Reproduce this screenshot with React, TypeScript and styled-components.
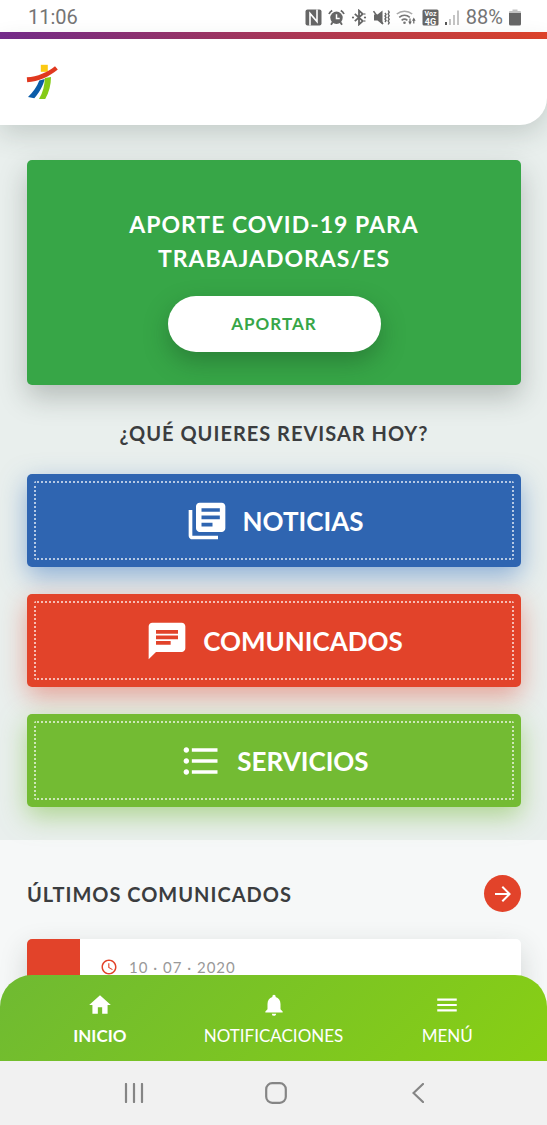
import React from 'react';
import styled, { createGlobalStyle } from 'styled-components';
import {
  MdAccessTime,
  MdArrowForward,
  MdChat,
  MdFormatListBulleted,
  MdHome,
  MdLibraryBooks,
  MdMenu,
  MdNotifications,
} from 'react-icons/md';

const GlobalStyle = createGlobalStyle`
  * { box-sizing: border-box; }
  body {
    margin: 0;
    font-family: Lato, "Liberation Sans", sans-serif;
    color: #3b3d3f;
    background: #e9efed;
  }
  h1, h2, p { margin: 0; }
  svg { display: block; flex: none; }
`;

const Screen = styled.div`
  display: flex;
  flex-direction: column;
  height: 100vh;
`;

const StatusBar = styled.div`
  display: flex;
  flex: none;
  align-items: center;
  justify-content: space-between;
  height: 32px;
  padding: 2px 26px 0 28px;
  background: #fff;
  color: #757575;
  font-family: Roboto, sans-serif;
  font-size: 20px;
  line-height: 24px;
`;

const StatusIcons = styled.div`
  display: flex;
  align-items: center;
  gap: 6px;
`;

const Stripe = styled.div`
  flex: none;
  height: 7px;
  background: linear-gradient(90deg, #752b8c, #e2432a);
`;

const Header = styled.header`
  display: flex;
  flex: none;
  align-items: center;
  height: 86px;
  padding: 0 26px;
  background: #fff;
  border-bottom-right-radius: 27px;
  box-shadow: 0 8px 28px rgba(40, 60, 50, 0.2);
  z-index: 1;
`;

const Scroller = styled.main`
  flex: 1;
  min-height: 0;
  margin: -28px 0 -32px;
  padding-top: 28px;
  overflow-y: auto;
  scrollbar-width: none;
`;

const HomeSection = styled.section`
  display: flex;
  flex-direction: column;
  padding: 35px 26px 33px 27px;
`;

const PromoCard = styled.div`
  display: flex;
  flex-direction: column;
  align-items: center;
  padding: 47px 60px 33px;
  border-radius: 5px;
  background: #37a647;
  box-shadow: 0 12px 28px rgba(40, 50, 45, 0.27);
`;

const PromoTitle = styled.h1`
  max-width: 320px;
  color: #fff;
  font-size: 23px;
  font-weight: 700;
  line-height: 34px;
  letter-spacing: 1px;
  text-align: center;
`;

const PillButton = styled.button`
  width: 213px;
  height: 56px;
  margin-top: 21px;
  border: 0;
  border-radius: 28px;
  background: #fff;
  color: #37a647;
  font: 700 17px/24px Lato, sans-serif;
  letter-spacing: 1px;
  box-shadow: 0 10px 24px rgba(20, 60, 30, 0.35);
`;

const Heading = styled.h2<{ $centered?: boolean }>`
  font-size: 20px;
  font-weight: 700;
  line-height: 32px;
  letter-spacing: 1px;
  text-align: ${(p) => (p.$centered ? 'center' : 'left')};
  padding: ${(p) => (p.$centered ? '32px 0 25px' : '0')};
`;

const TileList = styled.div`
  display: flex;
  flex-direction: column;
  gap: 27px;
`;

const Tile = styled.button<{ $color: string; $glow: string }>`
  display: flex;
  height: 93px;
  padding: 7px;
  border: 0;
  border-radius: 5px;
  background: ${(p) => p.$color};
  color: #fff;
  font: 700 26px/32px Lato, sans-serif;
  box-shadow: 0 9px 26px ${(p) => p.$glow};
`;

const TileFrame = styled.span`
  display: flex;
  flex: 1;
  align-self: stretch;
  align-items: center;
  justify-content: center;
  gap: 14px;
  border: 2px dotted rgba(255, 255, 255, 0.65);
  border-radius: 2px;
`;

const NewsSection = styled.section`
  padding: 35px 26px 40px 27px;
  background: rgba(250, 251, 251, 0.75);
`;

const NewsHeader = styled.div`
  display: flex;
  align-items: center;
  justify-content: space-between;
  margin-bottom: 27px;
`;

const RoundButton = styled.button`
  display: flex;
  align-items: center;
  justify-content: center;
  width: 37px;
  height: 37px;
  padding: 0;
  border: 0;
  border-radius: 50%;
  background: #e2432a;
  color: #fff;
`;

const NewsCard = styled.article`
  display: flex;
  height: 120px;
  border-radius: 5px;
  overflow: hidden;
  background: #fff;
  box-shadow: 0 10px 28px rgba(40, 50, 45, 0.18);
`;

const NewsAccent = styled.div`
  flex: none;
  width: 53px;
  background: #e2432a;
`;

const NewsDate = styled.div`
  display: flex;
  align-items: center;
  gap: 11px;
  height: 20px;
  margin: 18px 20px;
  color: #e2432a;
`;

const DateText = styled.time`
  color: #999;
  font-size: 15px;
  line-height: 20px;
  letter-spacing: 1px;
`;

const TabBar = styled.nav`
  display: flex;
  flex: none;
  height: 86px;
  padding: 0 13px;
  border-radius: 32px 32px 0 0;
  background: linear-gradient(135deg, #6fba32, #88cf14);
  z-index: 1;
`;

const Tab = styled.a<{ $active?: boolean }>`
  display: flex;
  flex: 1;
  flex-direction: column;
  align-items: center;
  gap: 6px;
  padding-top: 17px;
  color: #fff;
  font-size: 17px;
  font-weight: ${(p) => (p.$active ? 700 : 400)};
  line-height: 24px;
  text-decoration: none;
`;

const SystemBar = styled.div`
  display: flex;
  flex: none;
  height: 64px;
  padding: 0 58px 0 63px;
  background: #f1f1f1;
`;

const SystemButton = styled.button`
  display: flex;
  flex: 1;
  align-items: center;
  justify-content: center;
  padding: 0;
  border: 0;
  background: none;
  color: #858585;
`;

const NfcIcon = () => (
  <svg width="17" height="17" viewBox="0 0 17 17">
    <rect x="0.5" y="0.5" width="16" height="16" rx="2" fill="#666" />
    <path d="M5 16.5V4.500l7 8V0.500" fill="none" stroke="#fff" strokeWidth="1.600" />
  </svg>
);

const AlarmIcon = () => (
  <svg width="17" height="17" viewBox="0 0 17 17">
    <circle cx="8.5" cy="8.8" r="6.2" fill="#666" />
    <path d="M8.5 5.2v4.2h3.2" fill="none" stroke="#fff" strokeWidth="1.5" />
    <path
      d="M1 5a8 8 0 0 1 3.2-3.6M16 5a8 8 0 0 0-3.2-3.6M4.6 13.2L3 15.8M12.4 13.2l1.6 2.6"
      fill="none"
      stroke="#666"
      strokeWidth="1.8"
    />
  </svg>
);

const BluetoothIcon = () => (
  <svg width="16" height="17" viewBox="0 0 16 17">
    <path d="M3.8 4.8l8 7.2L8 15.4V1.6L11.8 5l-8 7.2" fill="none" stroke="#666" strokeWidth="1.8" />
    <g fill="#666">
      <circle cx="2" cy="8.5" r="1.1" />
      <circle cx="14" cy="8.5" r="1.1" />
      <circle cx="13.8" cy="5" r="0.8" />
      <circle cx="13.8" cy="12" r="0.8" />
    </g>
  </svg>
);

const MuteIcon = () => (
  <svg width="17" height="17" viewBox="0 0 17 17">
    <path d="M1 5.500h3.500L9.500 1.500v14L4.500 11.500H1z" fill="#666" />
    <path d="M0.500 2.200l9.500 12.800" stroke="#666" strokeWidth="1.500" />
    <path
      d="M12 4l1 1.500-1 1.500 1 1.500-1 1.500 1 1.500-1 1.500M15.200 1.500l1 1.700-1 1.800 1 1.700-1 1.800 1 1.700-1 1.800 1 1.700-1 1.800"
      fill="none"
      stroke="#666"
      strokeWidth="1.400"
    />
  </svg>
);

const WifiIcon = () => (
  <svg width="20" height="17" viewBox="0 0 20 17">
    <g fill="none" stroke="#777" strokeWidth="1.600">
      <path d="M0.800 5a12 12 0 0 1 15.400 0" stroke="#aaa" />
      <path d="M3.200 8.300a8.400 8.400 0 0 1 10.600 0M5.600 11.300a4.600 4.600 0 0 1 5.800 0" />
    </g>
    <circle cx="8.500" cy="13.800" r="1.300" fill="#777" />
    <path d="M12.200 12.500h3.600L14 15.800zM16 11.800h3.600L17.800 8.500z" fill="#666" />
    <path d="M14 9.500v4M17.800 11v3.500" stroke="#666" strokeWidth="1.200" />
  </svg>
);

const VolteIcon = () => (
  <svg width="17" height="17" viewBox="0 0 17 17">
    <rect x="0.500" y="0.500" width="16" height="16" rx="1.500" fill="#666" />
    <g fill="#fff" fontFamily="Roboto, sans-serif" fontWeight="700" textAnchor="middle">
      <text x="8.500" y="7" fontSize="7">Voz</text>
      <text x="8.500" y="15.500" fontSize="9">4G</text>
    </g>
  </svg>
);

const SignalIcon = () => (
  <svg width="15" height="17" viewBox="0 0 15 17">
    <rect x="0" y="13" width="2" height="3" fill="#555" />
    <path d="M5 16v-6M9 16V6M13 16V1.500" stroke="#c4c4c4" strokeWidth="2" />
  </svg>
);

const BatteryIcon = () => (
  <svg width="12" height="17" viewBox="0 0 12 17">
    <path d="M3.500 0.500h5V2H11a1 1 0 0 1 1 1v2H0V3a1 1 0 0 1 1-1h2.500z" fill="#c4c4c4" />
    <path d="M0 4h12v11a1.500 1.500 0 0 1-1.500 1.500h-9A1.500 1.500 0 0 1 0 15z" fill="#666" />
  </svg>
);

const Logo = () => (
  <svg width="32" height="36" viewBox="0 0 32 36" role="img" aria-label="Logo">
    <path d="M14.800 0.800h7v7h-7z" fill="#fbc912" />
    <path d="M13.300 16.500l5.500-1.500C17 22 13 29 8.300 34.200L2 33C7 28 11 22.500 13.300 16.500z" fill="#0a5ca8" />
    <path d="M18.800 14l6.200-1C25 20.500 23 28.500 19.200 35H13C17 28.500 18.700 21 18.800 14z" fill="#86cb16" />
    <path d="M0.800 13.300C11.500 12.500 21.500 8.500 29 2.200l2.800 3.300C23.500 12.500 12.500 17.500 1.200 18.300z" fill="#e0381f" />
  </svg>
);

const tiles = [
  { label: 'NOTICIAS', icon: MdLibraryBooks, color: '#2f65b1', glow: 'rgba(47, 110, 190, 0.5)' },
  { label: 'COMUNICADOS', icon: MdChat, color: '#e2432a', glow: 'rgba(226, 67, 42, 0.45)' },
  { label: 'SERVICIOS', icon: MdFormatListBulleted, color: '#73bb33', glow: 'rgba(115, 187, 51, 0.5)' },
];

const tabs = [
  { label: 'INICIO', icon: MdHome, active: true },
  { label: 'NOTIFICACIONES', icon: MdNotifications, active: false },
  { label: 'MENÚ', icon: MdMenu, active: false },
];

export default function App() {
  return (
    <Screen>
      <GlobalStyle />
      <StatusBar>
        <span>11:06</span>
        <StatusIcons>
          <NfcIcon />
          <AlarmIcon />
          <BluetoothIcon />
          <MuteIcon />
          <WifiIcon />
          <VolteIcon />
          <SignalIcon />
          <span>88%</span>
          <BatteryIcon />
        </StatusIcons>
      </StatusBar>
      <Stripe />
      <Header>
        <Logo />
      </Header>
      <Scroller>
        <HomeSection>
          <PromoCard>
            <PromoTitle>APORTE COVID-19 PARA TRABAJADORAS/ES</PromoTitle>
            <PillButton type="button">APORTAR</PillButton>
          </PromoCard>
          <Heading $centered>¿QUÉ QUIERES REVISAR HOY?</Heading>
          <TileList>
            {tiles.map(({ label, icon: Icon, color, glow }) => (
              <Tile key={label} type="button" $color={color} $glow={glow}>
                <TileFrame>
                  <Icon size={44} />
                  {label}
                </TileFrame>
              </Tile>
            ))}
          </TileList>
        </HomeSection>
        <NewsSection>
          <NewsHeader>
            <Heading>ÚLTIMOS COMUNICADOS</Heading>
            <RoundButton type="button" aria-label="Ver todos">
              <MdArrowForward size={24} />
            </RoundButton>
          </NewsHeader>
          <NewsCard>
            <NewsAccent />
            <NewsDate>
              <MdAccessTime size={18} />
              <DateText dateTime="2020-07-10">10 · 07 · 2020</DateText>
            </NewsDate>
          </NewsCard>
        </NewsSection>
      </Scroller>
      <TabBar>
        {tabs.map(({ label, icon: Icon, active }) => (
          <Tab key={label} href="#" $active={active} aria-current={active ? 'page' : undefined}>
            <Icon size={26} />
            {label}
          </Tab>
        ))}
      </TabBar>
      <SystemBar>
        <SystemButton type="button" aria-label="Recientes">
          <svg width="20" height="20" viewBox="0 0 20 20">
            <path d="M2 1v18M10 1v18M18 1v18" stroke="currentColor" strokeWidth="2.200" strokeLinecap="round" />
          </svg>
        </SystemButton>
        <SystemButton type="button" aria-label="Inicio">
          <svg width="22" height="22" viewBox="0 0 22 22">
            <rect x="1.200" y="1.200" width="19.600" height="19.600" rx="6" fill="none" stroke="currentColor" strokeWidth="2.200" />
          </svg>
        </SystemButton>
        <SystemButton type="button" aria-label="Atrás">
          <svg width="12" height="20" viewBox="0 0 12 20">
            <path d="M11 1L1.500 10l9.500 9" fill="none" stroke="currentColor" strokeWidth="2.200" strokeLinecap="round" />
          </svg>
        </SystemButton>
      </SystemBar>
    </Screen>
  );
}
